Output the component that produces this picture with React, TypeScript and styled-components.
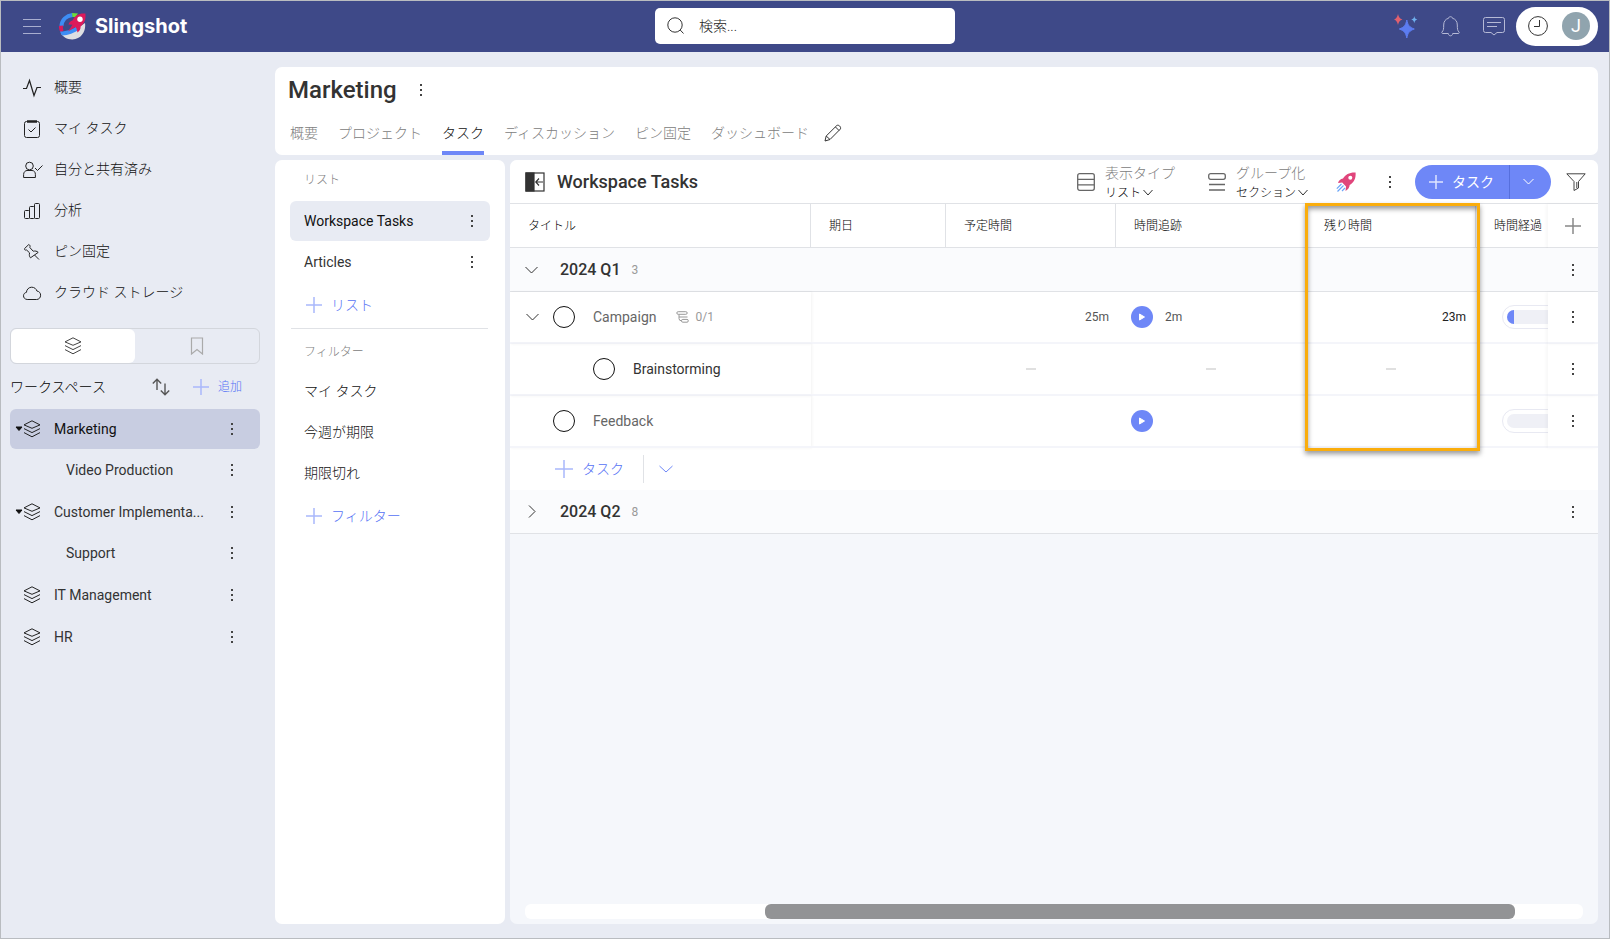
import React from "react";
import styled, { createGlobalStyle, css } from "styled-components";

const c = {
  navy: "#3e4988",
  page: "#e8ebf3",
  canvas: "#f5f7fb",
  accent: "#6e87f7",
  accentText: "#5672f5",
  accentSoft: "#a9b8fb",
  ink: "#333333",
  grey: "#999999",
  line: "#e0e2e6",
};

const GlobalStyle = createGlobalStyle`
  *, *::before, *::after { box-sizing: border-box; }
  body {
    margin: 0;
    font-family: Roboto, "Noto Sans CJK JP", sans-serif;
    font-size: 14px;
    line-height: 20px;
    color: ${c.ink};
  }
  button, input, select {
    font: inherit;
    color: inherit;
    margin: 0;
    padding: 0;
    border: 0;
    background: none;
  }
  button { cursor: pointer; display: flex; align-items: center; }
  a { color: inherit; text-decoration: none; }
  ul { list-style: none; margin: 0; padding: 0; }
  h1, h2 { margin: 0; font-weight: 500; }
  svg { display: block; flex: none; }
`;

/* Japanese labels use the light cut of the typeface. */
const lightLabel = css`
  font-weight: 300;
`;

/* ---------- icons ---------- */

type IconProps = {
  w?: number;
  h?: number;
  color?: string;
  sw?: number;
  children?: React.ReactNode;
};

const Icon = ({ w = 18, h = 18, color = c.ink, sw = 1, children }: IconProps) => (
  <svg width={w} height={h} viewBox={`0 0 ${w} ${h}`} fill="none" stroke={color} strokeWidth={sw} aria-hidden="true">
    {children}
  </svg>
);

const Plus = ({ size = 16, color = c.accentSoft }: { size?: number; color?: string }) => (
  <Icon w={size} h={size} color={color} sw={1.5}>
    <path d={`M${size / 2} 0V${size}M0 ${size / 2}H${size}`} />
  </Icon>
);

const Dots = () => (
  <svg width="4" height="14" viewBox="0 0 4 14" fill="#444" aria-hidden="true">
    <rect x="1" y="1" width="2" height="2" />
    <rect x="1" y="6" width="2" height="2" />
    <rect x="1" y="11" width="2" height="2" />
  </svg>
);

const ChevronDown = ({ w = 13, h = 8, color = c.ink }: { w?: number; h?: number; color?: string }) => (
  <Icon w={w} h={h} color={color}>
    <path d={`M0.5 1L${w / 2} ${h - 1}L${w - 0.5} 1`} />
  </Icon>
);

const ChevronRight = () => (
  <Icon w={8} h={13}>
    <path d="M1 0.5L7 6.5L1 12.5" />
  </Icon>
);

const Layers = ({ color = "#222" }: { color?: string }) => (
  <Icon color={color}>
    <path d="M9 0.8L17 4.9L9 8.3L1 4.9ZM1 8.6L9 12.6L17 8.6M1 12.6L9 16.8L17 12.6" />
  </Icon>
);

const PulseIcon = () => (
  <Icon color="#222" sw={1.2}>
    <path d="M0 9.5H3.5L6.5 1.5L11 16.5L14 8.5H18" />
  </Icon>
);

const ClipboardIcon = () => (
  <Icon color="#222">
    <rect x="1.5" y="1.5" width="15" height="16" rx="2" />
    <path d="M4 1.5H14" strokeWidth="2.5" />
    <path d="M5.5 9.5L8 12L12.5 7.5" />
  </Icon>
);

const SharedIcon = () => (
  <Icon color="#222">
    <circle cx="6.5" cy="5" r="3.8" />
    <path d="M0.6 16.5V13.5C0.6 11 2.5 9.5 4 9.5H9C11 9.5 12.4 11 12.4 13.5V16.5Z" />
    <path d="M12 7L14.5 9.5L19.5 4.5" />
  </Icon>
);

const BarsIcon = () => (
  <Icon color="#222">
    <rect x="1.5" y="8.5" width="5" height="8" rx="1" />
    <rect x="6.5" y="4.5" width="5" height="12" rx="1" />
    <rect x="11.5" y="1.5" width="5" height="15" rx="1" />
  </Icon>
);

const PinIcon = () => (
  <Icon color="#222">
    <path d="M5.8 1.5L1.6 5.5C1.2 6.8 2 7.4 3.6 7L6.6 9.9C6 12 6.4 13.6 7.5 14.8L15.2 9.4C13.8 8 12.2 7.8 10.2 8.2L6.9 4.6C7.3 3 7 2 5.8 1.5ZM11.5 12L16 16.5" />
  </Icon>
);

const CloudIcon = () => (
  <Icon color="#222">
    <path d="M4.2 15.5C1.8 15.3 0.5 13.6 0.5 11.8C0.5 9.9 1.9 8.6 3.4 8.4C3.6 5.4 5.9 3.2 8.7 3.2C11.2 3.2 13.2 4.7 13.9 7C16.3 7.4 17.6 9.1 17.6 11.2C17.6 13.8 15.8 15.5 13.6 15.5Z" />
  </Icon>
);

const BookmarkIcon = () => (
  <Icon w={14} color="#aaa" sw={1.2}>
    <path d="M1.5 1H12.5V17L7 12.5L1.5 17Z" />
  </Icon>
);

const SortIcon = () => (
  <Icon color="#555" sw={1.4}>
    <path d="M5 12V1.5M0.8 5.5L5 1.2L9.2 5.5M13 5.5V16.5M8.8 12.5L13 16.8L17.2 12.5" />
  </Icon>
);

const Caret = () => (
  <svg width="8" height="6" viewBox="0 0 8 6" fill="#111" aria-hidden="true">
    <path d="M1 1H7L4 4.5Z" stroke="#111" strokeLinejoin="round" />
  </svg>
);

const MenuIcon = () => (
  <Icon h={16} color="#a9aecf">
    <path d="M0 1.5H18M0 8.5H18M0 15.5H18" />
  </Icon>
);

const Logo = () => (
  <svg width="28" height="28" viewBox="0 0 28 28" aria-hidden="true">
    <path d="M3 21.5C10 21.5 18 17 27 11C28.2 18 24 27 14.5 27.4C9 27.5 5 25 3 21.5Z" fill="#dedfe2" />
    <path d="M3.4 14C4 8 8.5 3.8 14.5 3" fill="none" stroke="#3d8df5" strokeWidth="4" />
    <path d="M1 14L5 13.5C4.8 15.5 5 17 5.5 18.5L3 20.5C1.2 18.5 0.8 16 1 14Z" fill="#d81b5e" />
    <path d="M14 1L20 1.5L17.5 5H14.5Z" fill="#6fdc3c" />
    <path d="M2 19.5C9 19.5 15 17 20 13.5L22 17C16 21 10 23.5 4.5 23.5C3.4 22.5 2.5 21 2 19.5Z" fill="#3d8df5" />
    <path d="M27.4 1.6C21 1 17 3.5 14.5 8.5C12.5 9 11 10.5 10.5 12.5L14.5 12.8L10 19.5L17.5 15L18.5 16.5L19.5 20.5C21.5 19 22.8 17 22.6 14.5C26.5 11.5 28 7.5 27.4 1.6Z" fill="#dc1a5b" />
    <circle cx="22" cy="7.2" r="2.7" fill="#fff" />
  </svg>
);

const SearchIcon = () => (
  <Icon>
    <circle cx="8" cy="8" r="7.2" />
    <path d="M13.2 13L16.5 16.5" />
  </Icon>
);

const SparkleIcon = () => (
  <svg width="24" height="26" viewBox="0 0 24 26" aria-hidden="true">
    <path d="M12.8 7C13.9 12.2 15.3 14.2 20.3 16C15.3 17.8 13.9 19.8 12.8 25C11.7 19.8 10.3 17.8 5.3 16C10.3 14.2 11.7 12.2 12.8 7Z" fill="#5c7cf0" stroke="#5c7cf0" />
    <path d="M4 1C4.7 4.2 5.6 5.4 8.5 6.5C5.6 7.6 4.7 8.8 4 12C3.3 8.8 2.4 7.6 0 6.5C2.4 5.4 3.3 4.2 4 1Z" fill="#e0606e" />
    <path d="M20.3 3C20.8 5.2 21.3 6 23.4 6.6C21.3 7.2 20.8 8 20.3 10.2C19.8 8 19.3 7.2 17.2 6.6C19.3 6 19.8 5.2 20.3 3Z" fill="#6fb0ee" />
  </svg>
);

const BellIcon = () => (
  <Icon w={19} h={21} color="#b6bad6">
    <path d="M7.3 17.5C7.5 19 8.3 19.8 9.5 19.8C10.7 19.8 11.5 19 11.7 17.5H17.5C18.3 17.2 18.4 16.5 18 16C16.5 14.5 16.3 13 16.3 9C16.3 5.5 14.5 3 11.5 2.3C11.3 1.2 10.6 0.7 9.5 0.7C8.4 0.7 7.7 1.2 7.5 2.3C4.5 3 2.7 5.5 2.7 9C2.7 13 2.5 14.5 1 16C0.6 16.5 0.7 17.2 1.5 17.5Z" />
  </Icon>
);

const ChatIcon = () => (
  <Icon w={22} h={20} color="#b6bad6">
    <path d="M2.5 1.5H19.5Q21.5 1.5 21.5 3.5V14.5Q21.5 16.5 19.5 16.5H14L11 19L8 16.5H2.5Q0.5 16.5 0.5 14.5V3.5Q0.5 1.5 2.5 1.5ZM4 6.5H18M4 10.5H14" />
  </Icon>
);

const ClockIcon = () => (
  <Icon w={20} h={20}>
    <circle cx="10" cy="10" r="9.4" />
    <path d="M11.5 4V10.5H6" />
  </Icon>
);

const PencilIcon = () => (
  <Icon>
    <path d="M1 17L2.2 12L12.8 1.5C14.5 0.3 17.5 3 16.4 5L6 15.5ZM11.5 3L15 6.5M2.2 12L6 15.5" />
  </Icon>
);

const CollapseIcon = () => (
  <Icon w={20} h={20} sw={1.2}>
    <rect x="1" y="1" width="18" height="18" />
    <rect x="1" y="1" width="8" height="18" fill={c.ink} />
    <path d="M18 10H11M14 6.5L10.8 10L14 13.5" />
  </Icon>
);

const ListTypeIcon = () => (
  <Icon color="#666" sw={1.3}>
    <rect x="0.7" y="0.7" width="16.6" height="16.6" rx="2" />
    <path d="M1 6.3H17M1 11.8H17" />
  </Icon>
);

const GroupIcon = () => (
  <Icon color="#666" sw={1.3}>
    <rect x="0.7" y="0.7" width="16.6" height="5.6" rx="2" />
    <path d="M1 11.5H17M1 17H17" />
  </Icon>
);

const RocketIcon = () => (
  <svg width="20" height="20" viewBox="0 0 20 20" aria-hidden="true">
    <path d="M19.6 0.5C13.5 0.2 9.5 2.5 7 6.5C4.5 7 2.8 8.5 2 11L6.2 10.5L10 14.5L9.5 19C12 17.5 13.5 15.5 13.7 13C18 10.5 20 6.5 19.6 0.5Z" fill="#e0457b" />
    <circle cx="14.3" cy="5.8" r="2" fill="#fff" />
    <path d="M5.5 12L0.8 16.7M7.5 13.5L1.5 19.5M9 16L6 19" stroke="#6aa5f8" strokeWidth="1.2" fill="none" />
  </svg>
);

const FilterIcon = () => (
  <Icon w={20} color="#444">
    <path d="M0.8 0.8H19.2L12.5 8.5V15L8 17.5V8.5ZM10.8 9V15" />
  </Icon>
);

const SubtaskIcon = () => (
  <Icon w={13} h={12} color="#999">
    <path d="M2.2 0.7H9.8Q11.2 0.7 11.2 2Q11.2 3.3 9.8 3.3H2.2Q0.8 3.3 0.8 2Q0.8 0.7 2.2 0.7ZM3 3.5V7.5Q3 9.8 5.5 9.8M3 6H11.5M6.8 8.4H11Q12.3 8.4 12.3 9.8Q12.3 11.2 11 11.2H6.8Q5.5 11.2 5.5 9.8Q5.5 8.4 6.8 8.4Z" />
  </Icon>
);

const PlayGlyph = () => (
  <svg width="10" height="10" viewBox="0 0 10 10" fill="#fff" aria-hidden="true">
    <path d="M2.5 2L7.5 5L2.5 8Z" stroke="#fff" strokeLinejoin="round" />
  </svg>
);

/* ---------- shell ---------- */

const Frame = styled.div`
  min-height: 100vh;
  display: flex;
  flex-direction: column;
  background: ${c.page};
  border: 1px solid #b9bcc0;
`;

const TopBar = styled.header`
  display: grid;
  grid-template-columns: 1fr 300px 1fr;
  align-items: center;
  height: 51px;
  padding: 0 11px 1px;
  background: ${c.navy};
`;

const Brand = styled.div`
  display: flex;
  align-items: center;
  gap: 17px;
  padding-left: 11px;
`;

const BrandLink = styled.a`
  display: flex;
  align-items: center;
  gap: 9px;
  color: #fff;
  font: 700 20px/24px Inter, "Liberation Sans", sans-serif;
`;

const SearchBox = styled.label`
  display: flex;
  align-items: center;
  gap: 14px;
  height: 36px;
  padding: 0 12px;
  border-radius: 5px;
  background: #fff;
  input {
    flex: 1;
    min-width: 0;
    outline: none;
    ${lightLabel}
  }
  input::placeholder {
    color: #222;
    opacity: 1;
  }
`;

const TopActions = styled.div`
  display: flex;
  align-items: center;
  justify-content: flex-end;
  gap: 23px;
`;

const AccountPill = styled.div`
  display: flex;
  align-items: center;
  gap: 14px;
  height: 39px;
  margin-left: -12px;
  padding: 0 8px 0 12px;
  border-radius: 20px;
  background: #fff;
`;

const Avatar = styled.button`
  justify-content: center;
  width: 28px;
  height: 28px;
  border-radius: 50%;
  background: #90a4ae;
  color: #fff;
  font-size: 18px;
`;

const Body = styled.div`
  flex: 1;
  display: flex;
`;

/* ---------- sidebar ---------- */

const Sidebar = styled.aside`
  flex: none;
  width: 274px;
  padding: 15px 15px 0 9px;
`;

const NavLink = styled.a`
  display: flex;
  align-items: center;
  gap: 13px;
  height: 41px;
  padding-left: 13px;
  color: #111;
  ${lightLabel}
  svg { overflow: visible; }
`;

const NavText = styled.span`
  padding-bottom: 2px;
`;

const Segmented = styled.div`
  display: grid;
  grid-template-columns: 1fr 1fr;
  height: 36px;
  margin-top: 15px;
  border: 1px solid #d3d6dc;
  border-radius: 6px;
`;

const Segment = styled.button<{ $on?: boolean }>`
  justify-content: center;
  border-radius: 6px;
  background: ${(p) => (p.$on ? "#fff" : "transparent")};
`;

const SpacesHead = styled.div`
  display: flex;
  align-items: center;
  height: 45px;
  padding-right: 18px;
  color: #000;
`;

const SpacesTitle = styled.h2`
  flex: 1;
  font-size: 14px;
  && { ${lightLabel} }
`;

const AddLink = styled.button<{ $small?: boolean }>`
  gap: 9px;
  color: ${c.accentText};
  font-size: ${(p) => (p.$small ? "12px" : "14px")};
  margin-left: ${(p) => (p.$small ? "23px" : "0")};
  ${lightLabel}
`;

const SpaceGroup = styled.ul`
  display: flex;
  flex-direction: column;
  gap: 1px;
  margin-bottom: 2px;
`;

const SpaceRow = styled.li<{ $active?: boolean; $child?: boolean }>`
  display: flex;
  align-items: center;
  height: 40px;
  padding: 0 26px 0 ${(p) => (p.$child ? "56px" : "5px")};
  border-radius: 6px;
  ${(p) => p.$active && css`background: #c8cde1; color: #111;`}
`;

const CaretSlot = styled.span`
  width: 8px;
`;

const SpaceName = styled.a`
  flex: 1;
  display: flex;
  align-items: center;
  gap: 13px;
`;

/* ---------- main ---------- */

const Main = styled.main`
  flex: 1;
  min-width: 0;
  display: flex;
  flex-direction: column;
  gap: 5px;
  padding: 15px 11px 14px 0;
`;

const HeadCard = styled.section`
  display: flex;
  flex-direction: column;
  justify-content: space-between;
  height: 88px;
  padding: 8px 15px 0 13px;
  border-radius: 7px;
  background: #fff;
`;

const TitleLine = styled.div`
  display: flex;
  align-items: center;
  gap: 22px;
  h1 { font-size: 24px; line-height: 30px; font-weight: 500; }
`;

const Tabs = styled.nav`
  display: flex;
  gap: 20px;
  height: 44px;
  padding-left: 2px;
`;

const Tab = styled.a<{ $on?: boolean }>`
  display: flex;
  align-items: center;
  border-top: 4px solid transparent;
  border-bottom: 4px solid ${(p) => (p.$on ? c.accent : "transparent")};
  color: ${(p) => (p.$on ? "#111" : "#808080")};
  ${lightLabel}
`;

const EditTabs = styled.button`
  margin-left: -5px;
`;

const Columns = styled.div`
  flex: 1;
  display: flex;
  gap: 5px;
`;

const ListPanel = styled.section`
  flex: none;
  width: 230px;
  padding: 10px 15px;
  border-radius: 7px;
  background: #fff;
`;

const PanelLabel = styled.div`
  padding-left: 14px;
  color: #808080;
  font-size: 12px;
  ${lightLabel}
`;

const PanelRow = styled.a<{ $active?: boolean; $light?: boolean }>`
  display: flex;
  align-items: center;
  justify-content: space-between;
  height: 40px;
  margin-bottom: 1px;
  padding: 0 16px 0 14px;
  border-radius: 6px;
  ${(p) => p.$active && css`background: ${c.page}; color: #111;`}
  ${(p) => p.$light && css`color: #111; ${lightLabel}`}
`;

const PanelLists = styled.div`
  margin-top: 11px;
`;

const PanelFilters = styled.div`
  margin-top: 9px;
`;

const PanelAdd = styled.div`
  display: flex;
  align-items: center;
  height: 44px;
  padding: 0 0 1px 16px;
`;

const Divider = styled.hr`
  height: 1px;
  margin: 1px 2px 13px 1px;
  border: 0;
  background: ${c.line};
`;

const TaskPanel = styled.section`
  flex: 1;
  min-width: 0;
  display: flex;
  flex-direction: column;
  border-radius: 7px;
  background: ${c.canvas};
  overflow: hidden;
`;

const Toolbar = styled.div`
  display: flex;
  align-items: center;
  height: 44px;
  padding: 0 12px 0 15px;
  border-bottom: 1px solid ${c.line};
  background: #fff;
  h2 { flex: 1; margin-left: 12px; font-size: 18px; line-height: 24px; }
`;

const ViewOption = styled.label<{ $wide?: boolean }>`
  display: flex;
  align-items: center;
  gap: 10px;
  margin-right: ${(p) => (p.$wide ? "33px" : "28px")};
`;

const OptionText = styled.span`
  display: flex;
  flex-direction: column;
  padding-top: 2px;
  color: #808080;
  line-height: 20px;
  ${lightLabel}
`;

const OptionValue = styled.span`
  display: flex;
  align-items: center;
  gap: 2px;
  color: #000;
  font-size: 12px;
  select {
    appearance: none;
    height: 20px;
    line-height: 20px;
    field-sizing: content;
    outline: none;
  }
`;

const ToolButton = styled.button<{ $wide?: boolean }>`
  margin-right: ${(p) => (p.$wide ? "32px" : "23px")};
`;

const SplitButton = styled.div`
  display: flex;
  height: 34px;
  margin-right: 15px;
  border-radius: 17px;
  overflow: hidden;
  background: ${c.accent};
  color: #fff;
`;

const SplitMain = styled.button`
  gap: 9px;
  padding: 0 15px 0 14px;
  border-right: 1px solid #566fdd;
`;

const SplitMore = styled.button`
  width: 41px;
  padding-left: 13px;
`;

/* ---------- task table ---------- */

const TableArea = styled.div`
  position: relative;
`;

const Grid = styled.table`
  width: 100%;
  table-layout: fixed;
  border-collapse: separate;
  border-spacing: 0;
  background: #fff;
  td, th { padding: 0; text-align: left; }
`;

const Col = styled.col<{ $w?: number }>`
  ${(p) => p.$w && css`width: ${p.$w}px;`}
`;

const HeadCell = styled.th<{ $rule?: boolean }>`
  height: 44px;
  border-bottom: 1px solid ${c.line};
  ${(p) => p.$rule && css`border-right: 1px solid ${c.line};`}
  color: #000;
  font-size: 12px;
  ${lightLabel}
  && { padding-left: 18px; }
  white-space: nowrap;
`;

const HeadAction = styled.th`
  border-bottom: 1px solid ${c.line};
  box-shadow: -2px 0 3px rgba(0, 0, 0, 0.03);
`;

const SectionCell = styled.td`
  height: 44px;
  border-bottom: 1px solid ${c.line};
  background: #fafbfd;
`;

const SectionTitle = styled.button`
  padding-left: 15px;
  font-size: 16px;
  font-weight: 500;
  small { margin-left: 11px; color: ${c.grey}; font-size: 12px; font-weight: 400; }
`;

const ToggleSlot = styled.span`
  display: flex;
  justify-content: center;
  width: 13px;
  margin-right: 22px;
`;

const Cell = styled.td`
  height: 52px;
  border-bottom: 2px solid #f4f5fa;
  color: #555;
  font-size: 12px;
  overflow: hidden;
`;

const TitleCell = styled(Cell)`
  box-shadow: 1px 0 3px rgba(0, 0, 0, 0.05);
  font-size: 14px;
`;

const ActionCell = styled(Cell)`
  box-shadow: -2px 0 3px rgba(0, 0, 0, 0.03);
  overflow: visible;
`;

const TaskName = styled.div<{ $level: number; $dark?: boolean }>`
  display: flex;
  align-items: center;
  padding-left: ${(p) => (p.$level ? 83 : 43)}px;
  color: ${(p) => (p.$dark ? c.ink : "#666")};
`;

const ExpandTask = styled.button`
  width: 27px;
  margin-left: -27px;
`;

const TaskCheck = styled.input`
  appearance: none;
  width: 22px;
  height: 22px;
  margin: 0 18px 0 0;
  border: 1px solid #111;
  border-radius: 50%;
`;

const SubCount = styled.span`
  display: flex;
  align-items: center;
  gap: 6px;
  margin-left: 20px;
  color: ${c.grey};
  font-size: 12px;
`;

const EndValue = styled.div<{ $inset?: boolean }>`
  padding-right: ${(p) => (p.$inset ? "10px" : "7px")};
  color: ${(p) => (p.$inset ? "#222" : "#555")};
  text-align: right;
`;

const Dash = styled.div`
  width: 10px;
  height: 2px;
  margin: 0 auto;
  background: #e0e0e0;
`;

const Tracked = styled.div`
  display: flex;
  align-items: center;
  gap: 12px;
  padding-left: 15px;
`;

const Play = styled.button`
  justify-content: center;
  width: 22px;
  height: 22px;
  border-radius: 50%;
  background: ${c.accent};
`;

const Track = styled.div`
  width: 120px;
  height: 24px;
  margin-left: 26px;
  padding: 4px;
  border: 1px solid #e8e9f2;
  border-radius: 12px;
`;

const TrackInner = styled.div`
  height: 14px;
  border-radius: 7px;
  background: #eff0f6;
  overflow: hidden;
`;

const TrackFill = styled.div`
  height: 100%;
  background: ${c.accent};
`;

const Center = styled.div`
  display: flex;
  justify-content: center;
`;

const AddCell = styled.td`
  height: 42px;
`;

const AddTask = styled.div`
  display: flex;
  align-items: center;
  padding-left: 45px;
`;

const AddMore = styled.button`
  height: 28px;
  margin-left: 19px;
  padding-left: 15px;
  border-left: 1px solid ${c.line};
`;

const ColumnHighlight = styled.div`
  position: absolute;
  top: -1px;
  left: 795px;
  width: 175px;
  height: 248px;
  border: 3px solid #faad0c;
  box-shadow: 0 3px 5px rgba(0, 0, 0, 0.4), inset 0 3px 5px rgba(0, 0, 0, 0.4);
  pointer-events: none;
`;

const ScrollTrack = styled.div`
  height: 15px;
  margin: auto 15px 5px;
  border-radius: 6px;
  background: #fff;
`;

const ScrollThumb = styled.div`
  height: 100%;
  border-radius: 6px;
  background: #929395;
`;

/* ---------- data ---------- */

const navItems = [
  { label: "概要", icon: <PulseIcon /> },
  { label: "マイ タスク", icon: <ClipboardIcon /> },
  { label: "自分と共有済み", icon: <SharedIcon /> },
  { label: "分析", icon: <BarsIcon /> },
  { label: "ピン固定", icon: <PinIcon /> },
  { label: "クラウド ストレージ", icon: <CloudIcon /> },
];

const spaces = [
  { name: "Marketing", active: true, children: ["Video Production"] },
  { name: "Customer Implementa...", children: ["Support"] },
  { name: "IT Management", children: [] },
  { name: "HR", children: [] },
];

const tabs = ["概要", "プロジェクト", "タスク", "ディスカッション", "ピン固定", "ダッシュボード"];
const filters = ["マイ タスク", "今週が期限", "期限切れ"];

type Task = {
  name: string;
  level: number;
  sub?: string;
  planned?: string;
  tracked?: string;
  left?: string;
  progress?: number;
};

const tasks: Task[] = [
  { name: "Campaign", level: 0, sub: "0/1", planned: "25m", tracked: "2m", left: "23m", progress: 6 },
  { name: "Brainstorming", level: 1 },
  { name: "Feedback", level: 0, progress: 0 },
];

const scroll = { start: 22.7, size: 70.9 };

const More = ({ label }: { label: string }) => (
  <button type="button" aria-label={label}>
    <Dots />
  </button>
);

const SectionRow = ({ name, count, open }: { name: string; count: number; open?: boolean }) => (
  <tr>
    <SectionCell colSpan={6}>
      <SectionTitle type="button" aria-expanded={!!open}>
        <ToggleSlot>{open ? <ChevronDown /> : <ChevronRight />}</ToggleSlot>
        {name}
        <small>{count}</small>
      </SectionTitle>
    </SectionCell>
    <SectionCell>
      <Center><More label={name} /></Center>
    </SectionCell>
  </tr>
);

const TaskRow = ({ task }: { task: Task }) => {
  const child = task.level > 0;
  return (
    <tr>
      <TitleCell>
        <TaskName $level={task.level} $dark={child}>
          {task.sub && (
            <ExpandTask type="button" aria-label={task.name} aria-expanded="true">
              <ChevronDown />
            </ExpandTask>
          )}
          <TaskCheck type="checkbox" aria-label={task.name} />
          {task.name}
          {task.sub && <SubCount><SubtaskIcon />{task.sub}</SubCount>}
        </TaskName>
      </TitleCell>
      <Cell />
      <Cell>{child ? <Dash /> : <EndValue>{task.planned}</EndValue>}</Cell>
      <Cell>
        {child ? <Dash /> : (
          <Tracked>
            <Play type="button" aria-label="時間追跡"><PlayGlyph /></Play>
            {task.tracked}
          </Tracked>
        )}
      </Cell>
      <Cell>{child ? <Dash /> : <EndValue $inset>{task.left}</EndValue>}</Cell>
      <Cell>
        {task.progress !== undefined && (
          <Track>
            <TrackInner><TrackFill style={{ width: `${task.progress}%` }} /></TrackInner>
          </Track>
        )}
      </Cell>
      <ActionCell><Center><More label={task.name} /></Center></ActionCell>
    </tr>
  );
};

export default function App() {
  return (
    <>
      <GlobalStyle />
      <Frame>
        <TopBar>
          <Brand>
            <button type="button" aria-label="Menu"><MenuIcon /></button>
            <BrandLink href="#"><Logo />Slingshot</BrandLink>
          </Brand>
          <SearchBox>
            <SearchIcon />
            <input type="search" placeholder="検索..." aria-label="検索" />
          </SearchBox>
          <TopActions>
            <button type="button" aria-label="AI"><SparkleIcon /></button>
            <button type="button" aria-label="Notifications"><BellIcon /></button>
            <button type="button" aria-label="Chat"><ChatIcon /></button>
            <AccountPill>
              <button type="button" aria-label="Timer"><ClockIcon /></button>
              <Avatar type="button">J</Avatar>
            </AccountPill>
          </TopActions>
        </TopBar>

        <Body>
          <Sidebar>
            <nav>
              {navItems.map((item) => (
                <NavLink href="#" key={item.label}>{item.icon}<NavText>{item.label}</NavText></NavLink>
              ))}
            </nav>
            <Segmented>
              <Segment type="button" $on aria-label="ワークスペース"><Layers color="#444" /></Segment>
              <Segment type="button" aria-label="ブックマーク"><BookmarkIcon /></Segment>
            </Segmented>
            <SpacesHead>
              <SpacesTitle>ワークスペース</SpacesTitle>
              <button type="button" aria-label="Sort"><SortIcon /></button>
              <AddLink type="button" $small><Plus />追加</AddLink>
            </SpacesHead>
            {spaces.map((space) => (
              <SpaceGroup key={space.name}>
                <SpaceRow $active={space.active}>
                  <CaretSlot>{space.children.length > 0 && <Caret />}</CaretSlot>
                  <SpaceName href="#"><Layers />{space.name}</SpaceName>
                  <More label={space.name} />
                </SpaceRow>
                {space.children.map((name) => (
                  <SpaceRow $child key={name}>
                    <SpaceName href="#">{name}</SpaceName>
                    <More label={name} />
                  </SpaceRow>
                ))}
              </SpaceGroup>
            ))}
          </Sidebar>

          <Main>
            <HeadCard>
              <TitleLine>
                <h1>Marketing</h1>
                <More label="Marketing" />
              </TitleLine>
              <Tabs>
                {tabs.map((t) => <Tab href="#" key={t} $on={t === "タスク"}>{t}</Tab>)}
                <EditTabs type="button" aria-label="編集"><PencilIcon /></EditTabs>
              </Tabs>
            </HeadCard>

            <Columns>
              <ListPanel>
                <PanelLabel>リスト</PanelLabel>
                <PanelLists>
                  <PanelRow href="#" $active>Workspace Tasks<Dots /></PanelRow>
                  <PanelRow href="#">Articles<Dots /></PanelRow>
                  <PanelAdd><AddLink type="button"><Plus />リスト</AddLink></PanelAdd>
                </PanelLists>
                <Divider />
                <PanelLabel>フィルター</PanelLabel>
                <PanelFilters>
                  {filters.map((f) => <PanelRow href="#" key={f} $light>{f}</PanelRow>)}
                  <PanelAdd><AddLink type="button"><Plus />フィルター</AddLink></PanelAdd>
                </PanelFilters>
              </ListPanel>

              <TaskPanel>
                <Toolbar>
                  <button type="button" aria-label="Collapse"><CollapseIcon /></button>
                  <h2>Workspace Tasks</h2>
                  <ViewOption $wide>
                    <ListTypeIcon />
                    <OptionText>
                      表示タイプ
                      <OptionValue><select><option>リスト</option></select><ChevronDown w={10} h={7} /></OptionValue>
                    </OptionText>
                  </ViewOption>
                  <ViewOption>
                    <GroupIcon />
                    <OptionText>
                      グループ化
                      <OptionValue><select><option>セクション</option></select><ChevronDown w={10} h={7} /></OptionValue>
                    </OptionText>
                  </ViewOption>
                  <ToolButton type="button" aria-label="Launch" $wide><RocketIcon /></ToolButton>
                  <ToolButton type="button" aria-label="More"><Dots /></ToolButton>
                  <SplitButton>
                    <SplitMain type="button"><Plus size={14} color="#dfe5ff" />タスク</SplitMain>
                    <SplitMore type="button" aria-label="タスク"><ChevronDown w={11} h={7} color="#fff" /></SplitMore>
                  </SplitButton>
                  <button type="button" aria-label="フィルター"><FilterIcon /></button>
                </Toolbar>

                <TableArea>
                  <Grid>
                    <colgroup>
                      <Col $w={301} /><Col $w={135} /><Col $w={170} /><Col $w={190} /><Col $w={170} /><Col /><Col $w={50} />
                    </colgroup>
                    <thead>
                      <tr>
                        <HeadCell $rule>タイトル</HeadCell>
                        <HeadCell $rule>期日</HeadCell>
                        <HeadCell $rule>予定時間</HeadCell>
                        <HeadCell $rule>時間追跡</HeadCell>
                        <HeadCell $rule>残り時間</HeadCell>
                        <HeadCell>時間経過</HeadCell>
                        <HeadAction>
                          <Center><button type="button" aria-label="追加"><Plus color="#888" /></button></Center>
                        </HeadAction>
                      </tr>
                    </thead>
                    <tbody>
                      <SectionRow name="2024 Q1" count={3} open />
                      {tasks.map((t) => <TaskRow task={t} key={t.name} />)}
                      <tr>
                        <AddCell colSpan={7}>
                          <AddTask>
                            <AddLink type="button"><Plus size={18} />タスク</AddLink>
                            <AddMore type="button" aria-label="タスク"><ChevronDown w={14} color={c.accent} /></AddMore>
                          </AddTask>
                        </AddCell>
                      </tr>
                      <SectionRow name="2024 Q2" count={8} />
                    </tbody>
                  </Grid>
                  <ColumnHighlight />
                </TableArea>

                <ScrollTrack>
                  <ScrollThumb style={{ width: `${scroll.size}%`, marginLeft: `${scroll.start}%` }} />
                </ScrollTrack>
              </TaskPanel>
            </Columns>
          </Main>
        </Body>
      </Frame>
    </>
  );
}
